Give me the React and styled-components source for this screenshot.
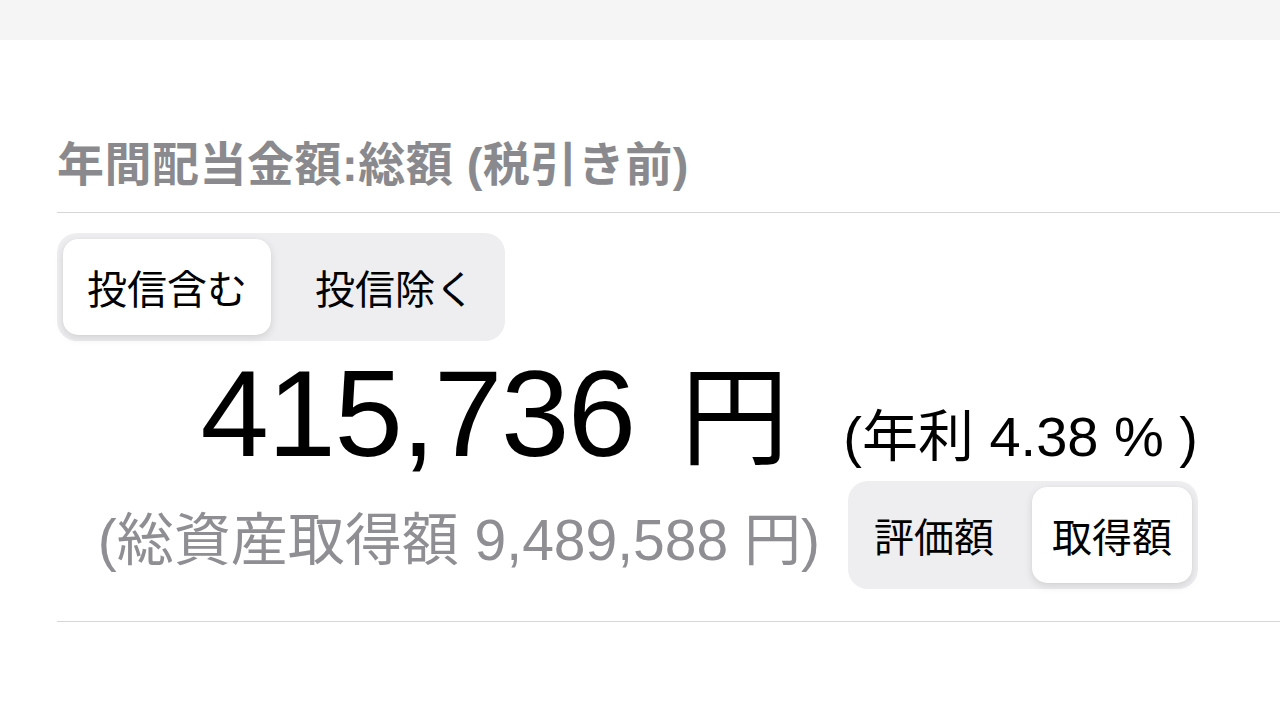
import styled, { createGlobalStyle } from 'styled-components';

const GlobalStyle = createGlobalStyle`
  html, body {
    margin: 0;
    padding: 0;
    background: #fff;
  }
  body {
    font-family: "Liberation Sans", "Noto Sans CJK JP", sans-serif;
    color: #000;
  }
`;

const TopBar = styled.div`
  height: 40px;
  background: #f5f5f5;
`;

const Section = styled.section`
  padding-left: 57px;
  padding-top: 94px;
`;

const Title = styled.h2`
  margin: 0;
  font-size: 47px;
  line-height: 62px;
  font-weight: 700;
  color: #8a8a8e;
  letter-spacing: 0.5px;
`;

const Divider = styled.hr`
  margin: ${(p) => p.$top || 0}px 0 0;
  border: none;
  border-top: 1.5px solid #d6d6d8;
`;

const Segmented = styled.div`
  display: inline-flex;
  align-items: center;
  background: #eeeef0;
  border-radius: 20px;
  padding: 6px;
  gap: ${(p) => p.$gap}px;
`;

const Segment = styled.div`
  width: ${(p) => p.$w}px;
  height: 96px;
  display: flex;
  align-items: center;
  justify-content: center;
  font-family: "Noto Sans CJK JP", sans-serif;
  font-size: 40px;
  border-radius: 15px;
  background: ${(p) => (p.$active ? '#fff' : 'transparent')};
  box-shadow: ${(p) =>
    p.$active ? '0 3px 8px rgba(0,0,0,0.12), 0 0 1px rgba(0,0,0,0.08)' : 'none'};
`;

const FilterRow = styled.div`
  margin-top: 20px;
`;

const AmountRow = styled.div`
  display: flex;
  justify-content: flex-end;
  align-items: baseline;
  padding-right: 82px;
  margin-top: 2px;
  gap: 56px;
`;

const Amount = styled.div`
  font-size: 123px;
  line-height: 132px;
  letter-spacing: -1.5px;
`;

const Yen = styled.span`
  font-family: "Noto Sans CJK JP", sans-serif;
  font-size: 108px;
  margin-left: 46px;
`;

const Rate = styled.div`
  font-size: 56px;
`;

const BasisRow = styled.div`
  display: flex;
  justify-content: flex-end;
  align-items: center;
  padding-right: 82px;
  margin-top: 1px;
  gap: 28px;
`;

const Basis = styled.div`
  font-size: 57px;
  color: #8e8e93;
`;

export default function App() {
  return (
    <>
      <GlobalStyle />
      <TopBar />
      <Section>
        <Title>年間配当金額:総額 (税引き前)</Title>
        <Divider $top={16} />
        <FilterRow>
          <Segmented $gap={20}>
            <Segment $active $w={208}>投信含む</Segment>
            <Segment $w={208}>投信除く</Segment>
          </Segmented>
        </FilterRow>
        <AmountRow>
          <Amount>
            415,736<Yen>円</Yen>
          </Amount>
          <Rate>(年利 4.38 % )</Rate>
        </AmountRow>
        <BasisRow>
          <Basis>(総資産取得額 9,489,588 円)</Basis>
          <Segmented $gap={18}>
            <Segment $w={160}>評価額</Segment>
            <Segment $active $w={160}>取得額</Segment>
          </Segmented>
        </BasisRow>
        <Divider $top={32} />
      </Section>
    </>
  );
}
